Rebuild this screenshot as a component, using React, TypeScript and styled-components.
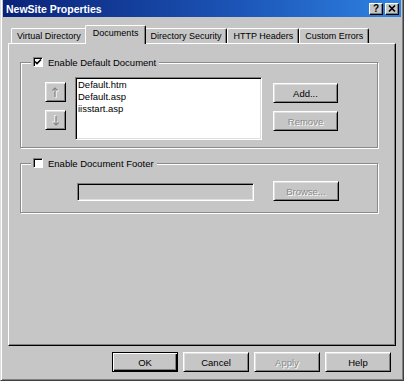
import styled, { createGlobalStyle } from "styled-components";

const GlobalStyle = createGlobalStyle`
  html, body {
    margin: 0;
    padding: 0;
    background: #c6c6c6;
  }
  body {
    font-family: "Liberation Sans", Arial, sans-serif;
    font-size: 9.5px;
    color: #000;
  }
`;

const Window = styled.div`
  width: 404px;
  height: 381px;
  box-sizing: border-box;
  background: #c6c6c6;
  border-left: 1px solid #dcdcdc;
  border-right: 1px solid #404040;
  border-bottom: 1px solid #404040;
  box-shadow: inset 1px 0 #fff, inset -1px -1px #808080;
  padding: 0 2px 2px 2px;
  display: flex;
  flex-direction: column;
`;

const TitleBar = styled.div`
  height: 17px;
  flex-shrink: 0;
  display: flex;
  align-items: center;
  padding: 0 2px 0 3px;
  background: linear-gradient(to right, #0a2278, #1c56b8 60%, #2f82e2);
  color: #fff;
  font-weight: bold;
  font-size: 10.5px;
`;

const TitleText = styled.span`
  flex: 1;
`;

const TitleButtons = styled.div`
  display: flex;
  gap: 2px;
`;

const TitleButton = styled.div`
  width: 14px;
  height: 12px;
  box-sizing: border-box;
  background: #c6c6c6;
  border: 1px solid;
  border-color: #fff #000 #000 #fff;
  box-shadow: inset -1px -1px #808080;
  display: flex;
  align-items: center;
  justify-content: center;
  color: #000;
  font-size: 10px;
  font-weight: bold;
  line-height: 1;
`;

const Body = styled.div`
  padding: 8px 5px 0 5px;
  display: flex;
  flex-direction: column;
`;

const TabStrip = styled.div`
  height: 18px;
  display: flex;
  align-items: flex-end;
  padding-left: 3px;
  position: relative;
  z-index: 1;
  font-size: 9px;
`;

const Tab = styled.div<{ $active?: boolean }>`
  position: relative;
  box-sizing: border-box;
  height: ${(p) => (p.$active ? "19px" : "15px")};
  margin: ${(p) => (p.$active ? "0 -2px -1px -2px" : "0")};
  padding: ${(p) => (p.$active ? "2px 7px 0 7px" : "0 5px")};
  z-index: ${(p) => (p.$active ? 2 : 1)};
  background: #c6c6c6;
  border-top: 1px solid #fff;
  border-left: 1px solid #fff;
  border-right: 1px solid #000;
  border-top-left-radius: 2px;
  border-top-right-radius: 2px;
  box-shadow: inset -1px 0 #808080;
  display: flex;
  align-items: ${(p) => (p.$active ? "flex-start" : "center")};
  white-space: nowrap;
`;

const Panel = styled.div`
  height: 303px;
  box-sizing: border-box;
  border-top: 1px solid #fff;
  border-left: 1px solid #fff;
  border-right: 1px solid #000;
  border-bottom: 1px solid #000;
  box-shadow: inset -1px -1px #808080;
  padding: 18px 17px 0 11px;
  display: flex;
  flex-direction: column;
`;

const Group = styled.div<{ $height: number }>`
  position: relative;
  height: ${(p) => p.$height}px;
  box-sizing: border-box;
  border: 1px solid #8a8a8a;
  box-shadow: inset 1px 1px #fff, 1px 1px #fff;
  & + & {
    margin-top: 15px;
  }
`;

const Legend = styled.label`
  position: absolute;
  left: 10px;
  top: -7px;
  height: 12px;
  padding: 0 3px 0 2px;
  background: #c6c6c6;
  display: flex;
  align-items: center;
  gap: 5px;
`;

const CheckBox = styled.span`
  width: 10px;
  height: 10px;
  box-sizing: border-box;
  background: #fff;
  border: 1px solid;
  border-color: #808080 #fff #fff #808080;
  box-shadow: inset 1px 1px #000;
  display: flex;
  align-items: center;
  justify-content: center;
`;

const DocRow = styled.div`
  display: flex;
  padding: 14px 0 0 24px;
`;

const ArrowColumn = styled.div`
  display: flex;
  flex-direction: column;
  gap: 8px;
  padding-top: 5px;
`;

const Button = styled.button<{ $w: number; $default?: boolean }>`
  width: ${(p) => p.$w}px;
  height: 20px;
  box-sizing: border-box;
  padding: 0;
  margin: 0;
  background: #c6c6c6;
  font-family: "Liberation Sans", Arial, sans-serif;
  font-size: 9.5px;
  color: #000;
  display: flex;
  align-items: center;
  justify-content: center;
  border: 1px solid;
  border-color: ${(p) => (p.$default ? "#000" : "#fff #000 #000 #fff")};
  box-shadow: ${(p) =>
    p.$default
      ? "inset 1px 1px #fff, inset -1px -1px #000, inset -2px -2px #808080"
      : "inset 1px 1px #dfdfdf, inset -1px -1px #808080"};
  &:disabled {
    color: #8a8a8a;
    text-shadow: 1px 1px #fff;
  }
`;

const ListBox = styled.div`
  width: 187px;
  height: 63px;
  box-sizing: border-box;
  margin-left: 9px;
  background: #fff;
  border: 1px solid;
  border-color: #808080 #fff #fff #808080;
  box-shadow: inset 1px 1px #000, inset -1px -1px #dfdfdf;
  padding: 1px 2px 0 2px;
`;

const ListItem = styled.div`
  line-height: 12px;
`;

const SideButtons = styled.div`
  display: flex;
  flex-direction: column;
  gap: 8px;
  margin-left: 11px;
  padding-top: 6px;
`;

const FooterRow = styled.div`
  display: flex;
  align-items: flex-start;
  padding: 17px 0 0 56px;
`;

const TextField = styled.div`
  width: 177px;
  height: 18px;
  box-sizing: border-box;
  margin-top: 2px;
  margin-right: 19px;
  background: #c6c6c6;
  border: 1px solid;
  border-color: #808080 #fff #fff #808080;
  box-shadow: inset 1px 1px #000, inset -1px -1px #dfdfdf;
`;

const ButtonRow = styled.div`
  display: flex;
  justify-content: flex-end;
  gap: 5px;
  margin-top: 6px;
  padding-right: 5px;
`;

const Check = () => (
  <svg width="8" height="8" viewBox="0 0 8 8">
    <path d="M1 3.5 L3 5.5 L7 1.5" stroke="#000" strokeWidth="1.6" fill="none" />
  </svg>
);

const Arrow = ({ down }: { down?: boolean }) => (
  <svg width="9" height="11" viewBox="0 0 9 11">
    <g transform={down ? "rotate(180 4.5 5.5)" : undefined}>
      <g stroke="#fff" strokeWidth="1.2" fill="none" transform="translate(1 1)">
        <path d="M4 1 V10" />
        <path d="M1.5 3.5 L4 1 L6.5 3.5" />
      </g>
      <g stroke="#808080" strokeWidth="1.2" fill="none">
        <path d="M4 1 V10" />
        <path d="M1.5 3.5 L4 1 L6.5 3.5" />
      </g>
    </g>
  </svg>
);

const CloseGlyph = () => (
  <svg width="8" height="7" viewBox="0 0 8 7">
    <path d="M1 0.5 L7 6.5 M7 0.5 L1 6.5" stroke="#000" strokeWidth="1.6" />
  </svg>
);

const tabs = ["Virtual Directory", "Documents", "Directory Security", "HTTP Headers", "Custom Errors"];
const docs = ["Default.htm", "Default.asp", "iisstart.asp"];

export default function App() {
  return (
    <>
      <GlobalStyle />
      <Window>
        <TitleBar>
          <TitleText>NewSite Properties</TitleText>
          <TitleButtons>
            <TitleButton>?</TitleButton>
            <TitleButton>
              <CloseGlyph />
            </TitleButton>
          </TitleButtons>
        </TitleBar>
        <Body>
          <TabStrip>
            {tabs.map((t) => (
              <Tab key={t} $active={t === "Documents"}>
                {t}
              </Tab>
            ))}
          </TabStrip>
          <Panel>
            <Group $height={86}>
              <Legend>
                <CheckBox>
                  <Check />
                </CheckBox>
                Enable Default Document
              </Legend>
              <DocRow>
                <ArrowColumn>
                  <Button $w={21} disabled>
                    <Arrow />
                  </Button>
                  <Button $w={21} disabled>
                    <Arrow down />
                  </Button>
                </ArrowColumn>
                <ListBox>
                  {docs.map((d) => (
                    <ListItem key={d}>{d}</ListItem>
                  ))}
                </ListBox>
                <SideButtons>
                  <Button $w={65}>Add...</Button>
                  <Button $w={65} disabled>
                    Remove
                  </Button>
                </SideButtons>
              </DocRow>
            </Group>
            <Group $height={50}>
              <Legend>
                <CheckBox />
                Enable Document Footer
              </Legend>
              <FooterRow>
                <TextField />
                <Button $w={66} disabled>
                  Browse...
                </Button>
              </FooterRow>
            </Group>
          </Panel>
          <ButtonRow>
            <Button $w={66} $default>
              OK
            </Button>
            <Button $w={66}>Cancel</Button>
            <Button $w={66} disabled>
              Apply
            </Button>
            <Button $w={66}>Help</Button>
          </ButtonRow>
        </Body>
      </Window>
    </>
  );
}
